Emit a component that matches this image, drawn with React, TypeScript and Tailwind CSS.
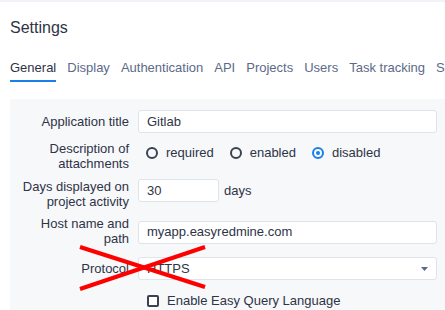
import React from 'react';

const tabs = ['General', 'Display', 'Authentication', 'API', 'Projects', 'Users', 'Task tracking', 'Settings'];

const Radio = ({ label, checked }: { label: string; checked?: boolean }) => (
    <label className="flex items-center gap-[8px]">
        {checked ? (
            <span className="w-[12px] h-[12px] rounded-full border-2 border-[#1a7fe8] flex items-center justify-center">
                <span className="w-[4px] h-[4px] rounded-full bg-[#1a7fe8]" />
            </span>
        ) : (
            <span className="w-[12px] h-[12px] rounded-full border-2 border-[#3a4252]" />
        )}
        <span>{label}</span>
    </label>
);

const inputCls = 'h-[23px] bg-white border border-[#dfe3ea] rounded-[3px] px-[8px] flex items-center';
const labelCls = 'w-[119px] pl-[9px] text-right leading-[15px] shrink-0';

export default function App() {
    return (
        <div className="w-[445px] h-[310px] overflow-hidden bg-white text-[13px] text-[#2e3447] font-['Liberation_Sans',Arial,sans-serif] relative">
            <div className="h-[2px] bg-[#f0f3f7]" />
            <h1 className="px-[10px] pt-[16px] text-[16px] leading-[20px] text-[#2e3447]">Settings</h1>
            <nav className="flex gap-[11px] px-[10px] pt-[22px] whitespace-nowrap">
                {tabs.map((t, i) => (
                    <div key={t} className={`pb-[4px] border-b-2 leading-[16px] ${i === 0 ? 'border-[#1a7fe8] text-[#2e3447]' : 'border-transparent text-[#5c6a88]'}`}>
                        {t}
                    </div>
                ))}
            </nav>

            <div className="ml-[10px] mt-[17px] bg-[#f7f8fa] pt-[11px] pr-[8px] pb-[10px]">
                <div className="flex items-center gap-[9px]">
                    <div className={labelCls}>Application title</div>
                    <div className={`${inputCls} flex-1`}>Gitlab</div>
                </div>

                <div className="flex items-center gap-[9px] mt-[8px]">
                    <div className={labelCls}>Description of attachments</div>
                    <div className="flex items-center gap-[16px] pl-[8px] -mt-[6px]">
                        <Radio label="required" />
                        <Radio label="enabled" />
                        <Radio label="disabled" checked />
                    </div>
                </div>

                <div className="flex items-start gap-[9px] mt-[8px]">
                    <div className={labelCls}>Days displayed on project activity</div>
                    <div className="flex items-center gap-[5px]">
                        <div className={`${inputCls} w-[81px]`}>30</div>
                        <span>days</span>
                    </div>
                </div>

                <div className="flex items-center gap-[9px] mt-[7px]">
                    <div className={labelCls}>Host name and path</div>
                    <div className={`${inputCls} flex-1 mt-[2px]`}>myapp.easyredmine.com</div>
                </div>

                <div className="flex items-center gap-[9px] mt-[11px]">
                    <div className={labelCls}>Protocol</div>
                    <div className={`${inputCls} flex-1 justify-between`}>
                        <span>HTTPS</span>
                        <svg width="7" height="4" viewBox="0 0 7 4">
                            <path d="M0 0 H7 L3.5 4 Z" fill="#5c6a88" />
                        </svg>
                    </div>
                </div>

                <div className="flex items-center gap-[8px] mt-[13px] pl-[137px] leading-[15px]">
                    <span className="w-[12px] h-[12px] border-2 border-[#3a4252] rounded-[2px] bg-white" />
                    <span>Enable Easy Query Language</span>
                </div>
            </div>

            <svg className="absolute left-[78px] top-[245px]" width="130" height="46" viewBox="0 0 130 46">
                <line x1="2" y1="2" x2="127" y2="42" stroke="#ff0000" strokeWidth="4" />
                <line x1="2" y1="44" x2="127" y2="2" stroke="#ff0000" strokeWidth="4" />
            </svg>
        </div>
    );
}
